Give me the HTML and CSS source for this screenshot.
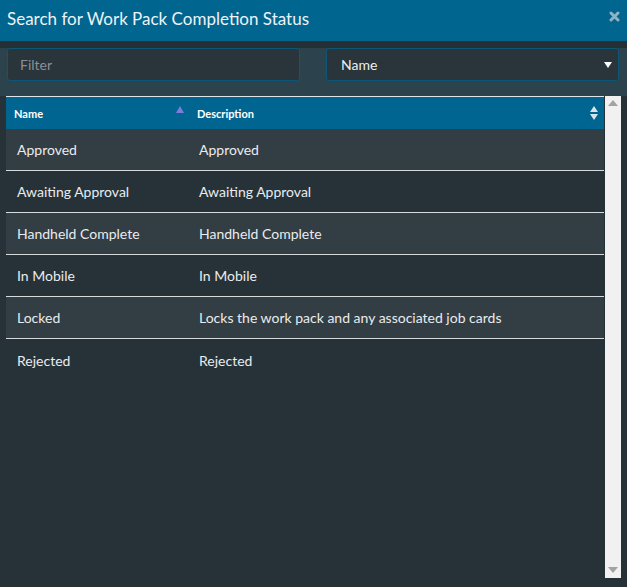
FILE: index.html
```html
<!DOCTYPE html>
<html>
<head>
<meta charset="utf-8">
<link rel="stylesheet" href="styles.css">
</head>
<body>
<div class="header">
  <div class="title">Search for Work Pack Completion Status</div>
  <svg class="close" width="11" height="11" viewBox="0 0 11 11"><path d="M2 2 L9 9 M9 2 L2 9" stroke="#8fb3c6" stroke-width="3" stroke-linecap="round"/></svg>
</div>
<div class="strip"></div>
<div class="filters">
  <div class="input"><span class="placeholder">Filter</span></div>
  <div class="select"><span>Name</span><svg class="caret" width="8" height="6" viewBox="0 0 8 6"><path d="M0 0 H8 L4 6 Z" fill="#ffffff"/></svg></div>
</div>
<div class="content">
  <div class="table">
    <div class="thead">
      <div class="th c1"><span>Name</span><svg class="sort" width="8" height="7" viewBox="0 0 8 7"><path d="M0 7 L4 0 L8 7 Z" fill="#7d7de0"/></svg></div>
      <div class="th c2"><span>Description</span><svg class="sort2" width="8" height="14" viewBox="0 0 8 14"><path d="M0 6 L4 0 L8 6 Z M0 8 L8 8 L4 14 Z" fill="#d8e4ea"/></svg></div>
    </div>
    <div class="row odd"><div class="c1">Approved</div><div class="c2">Approved</div></div>
    <div class="row"><div class="c1">Awaiting Approval</div><div class="c2">Awaiting Approval</div></div>
    <div class="row odd"><div class="c1">Handheld Complete</div><div class="c2">Handheld Complete</div></div>
    <div class="row"><div class="c1">In Mobile</div><div class="c2">In Mobile</div></div>
    <div class="row odd"><div class="c1">Locked</div><div class="c2">Locks the work pack and any associated job cards</div></div>
    <div class="row last"><div class="c1">Rejected</div><div class="c2">Rejected</div></div>
  </div>
  <div class="scrollbar">
    <svg width="10" height="6" viewBox="0 0 10 6"><path d="M0 6 L5 0 L10 6 Z" fill="#a3a3a3"/></svg>
    <svg width="10" height="6" viewBox="0 0 10 6"><path d="M0 0 L10 0 L5 6 Z" fill="#a3a3a3"/></svg>
  </div>
</div>
</body>
</html>
```

FILE: styles.css
```css
html, body {
  margin: 0;
  padding: 0;
}
body {
  background: #263238;
  font-family: "Lato", "Open Sans", sans-serif;
  color: #e8ecee;
  width: 627px;
  height: 587px;
  overflow: hidden;
}
.header {
  height: 41px;
  background: #00658f;
  display: flex;
  align-items: center;
  justify-content: space-between;
  padding: 0 8px 0 7px;
  box-sizing: border-box;
}
.title {
  font-size: 17px;
  color: #eef3f6;
  margin-top: -4px;
}
.close {
  margin-top: -8px;
  margin-right: -1px;
}
.strip {
  height: 7px;
  background: #252f36;
}
.filters {
  height: 48px;
  background: #2c424d;
  display: flex;
  justify-content: space-between;
  padding: 0 8px 0 7px;
  box-sizing: border-box;
}
.input, .select {
  width: 293px;
  height: 33px;
  box-sizing: border-box;
  border: 1px solid #0c5677;
  border-radius: 3px;
  background: #29343b;
  display: flex;
  align-items: center;
  font-size: 14px;
}
.input {
  padding-left: 12px;
}
.placeholder {
  color: #8b9094;
}
.select {
  padding: 0 6px 0 14px;
  justify-content: space-between;
  color: #eceff1;
}
.content {
  display: flex;
  padding-left: 6px;
  height: 483px;
}
.table {
  width: 598px;
}
.thead {
  display: flex;
  height: 33px;
  background: #006590;
  border-top: 1px solid #dfe5e8;
  box-sizing: border-box;
  font-size: 11px;
  font-weight: bold;
  color: #ffffff;
}
.c1 {
  width: 183px;
  box-sizing: border-box;
  padding-left: 11px;
}
.c2 {
  flex: 1;
  box-sizing: border-box;
  padding-left: 10px;
}
.th {
  display: flex;
  align-items: center;
  justify-content: space-between;
  padding-right: 5px;
}
.th.c1 {
  padding-left: 8px;
}
.th.c2 {
  padding-left: 8px;
  padding-right: 6px;
}
.sort {
  align-self: flex-start;
  margin-top: 9px;
}
.row {
  display: flex;
  align-items: center;
  height: 42px;
  box-sizing: border-box;
  border-bottom: 1px solid #d6dadc;
  font-size: 14px;
  color: #e9ecee;
}
.row.odd {
  background: #333d44;
}
.row.last {
  border-bottom: 0;
}
.scrollbar {
  margin-left: 1px;
  width: 16px;
  height: 482px;
  background: #f1f1f1;
  display: flex;
  flex-direction: column;
  justify-content: space-between;
  align-items: center;
  padding: 4px 0 5px 0;
  box-sizing: border-box;
}
```
